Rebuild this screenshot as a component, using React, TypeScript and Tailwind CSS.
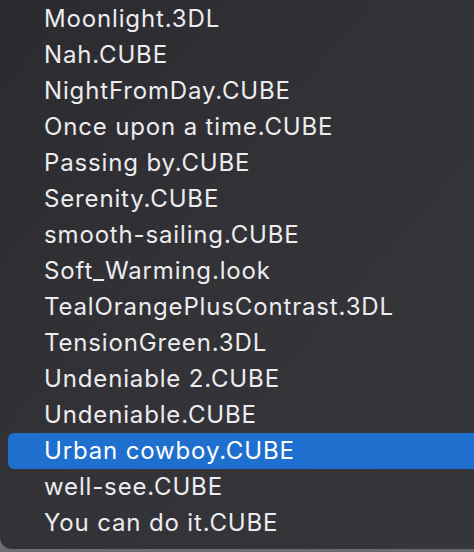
const items = [
  'Moonlight.3DL',
  'Nah.CUBE',
  'NightFromDay.CUBE',
  'Once upon a time.CUBE',
  'Passing by.CUBE',
  'Serenity.CUBE',
  'smooth-sailing.CUBE',
  'Soft_Warming.look',
  'TealOrangePlusContrast.3DL',
  'TensionGreen.3DL',
  'Undeniable 2.CUBE',
  'Undeniable.CUBE',
  'Urban cowboy.CUBE',
  'well-see.CUBE',
  'You can do it.CUBE',
];

const selected = 'Urban cowboy.CUBE';

export default function App() {
  return (
    <div className="h-[552px] w-[474px] overflow-hidden bg-[#6d6d70]">
      <div className="h-[549px] w-full rounded-bl-[12px] bg-gradient-to-br from-[#2b2b2f] via-[#333337] to-[#36363a] pt-[1px] font-['Inter',sans-serif]">
        {items.map((name) => (
          <div
            key={name}
            className={
              name === selected
                ? 'ml-2 flex h-9 items-center rounded-l-[6px] bg-[#1f6fcf] pl-[36px] text-[24px] font-normal tracking-[0.85px] text-white'
                : 'ml-2 flex h-9 items-center pl-[36px] text-[24px] font-normal tracking-[0.85px] text-[#ececee]'
            }
          >
            {name}
          </div>
        ))}
      </div>
    </div>
  );
}
